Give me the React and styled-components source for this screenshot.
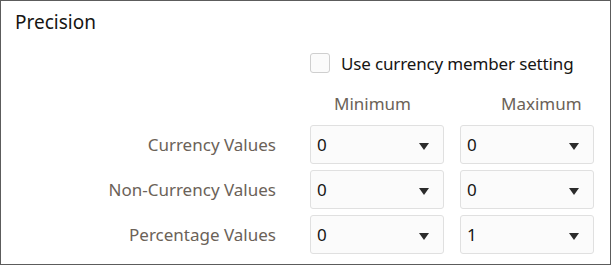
import { Fragment } from "react";
import styled, { createGlobalStyle } from "styled-components";

const GlobalStyle = createGlobalStyle`
  body {
    margin: 0;
    background: #fff;
    font-family: "Noto Sans", "Open Sans", sans-serif;
    color: #161513;
  }
`;

const Panel = styled.section`
  box-sizing: border-box;
  width: 611px;
  height: 265px;
  border: 1px solid #5c5c5c;
  padding: 8px 16px 0 14px;
`;

const Title = styled.h2`
  margin: 0;
  font-size: 19px;
  font-weight: 400;
  line-height: 26px;
  color: #161513;
`;

const Grid = styled.div`
  display: grid;
  grid-template-columns: 1fr 134px 134px;
  column-gap: 16px;
  row-gap: 6px;
  margin-top: 18px;
`;

const CheckRow = styled.label`
  grid-column: 2 / 4;
  display: flex;
  align-items: center;
  gap: 11px;
  height: 20px;
  font-size: 17px;
  letter-spacing: -0.15px;
  color: #161513;
`;

const Box = styled.span`
  box-sizing: border-box;
  flex: none;
  width: 20px;
  height: 20px;
  border: 1px solid #cfcfcf;
  border-radius: 3px;
  background: #fbfbfb;
`;

const ColHead = styled.div`
  grid-column: ${(p) => p.$col};
  padding-left: ${(p) => p.$indent}px;
  font-size: 17px;
  line-height: 22px;
  color: #6b6258;
  margin-top: 14px;
  margin-bottom: 4px;
`;

const Spacer = styled.div`
  grid-column: 1;
`;

const RowLabel = styled.div`
  grid-column: 1;
  display: flex;
  align-items: center;
  justify-content: flex-end;
  padding-right: 18px;
  font-size: 17px;
  color: #6b6258;
`;

const Select = styled.div`
  box-sizing: border-box;
  height: 39px;
  display: flex;
  align-items: center;
  justify-content: space-between;
  padding: 0 14px 0 6px;
  border: 1px solid #e0e0e0;
  border-radius: 3px;
  background: #fbfbfb;
  font-size: 17px;
  color: #161513;
`;

const Caret = styled.span`
  width: 0;
  height: 0;
  margin-top: 3px;
  border-left: 5px solid transparent;
  border-right: 5px solid transparent;
  border-top: 7px solid #2b2b2b;
`;

const rows = [
  { label: "Currency Values", min: "0", max: "0" },
  { label: "Non-Currency Values", min: "0", max: "0" },
  { label: "Percentage Values", min: "0", max: "1" },
];

export default function App() {
  return (
    <>
      <GlobalStyle />
      <Panel>
        <Title>Precision</Title>
        <Grid>
          <CheckRow>
            <Box />
            Use currency member setting
          </CheckRow>
          <Spacer />
          <ColHead $col={2} $indent={24}>Minimum</ColHead>
          <ColHead $col={3} $indent={41}>Maximum</ColHead>
          {rows.map((r) => (
            <Fragment key={r.label}>
              <RowLabel>{r.label}</RowLabel>
              <Select>
                {r.min}
                <Caret />
              </Select>
              <Select>
                {r.max}
                <Caret />
              </Select>
            </Fragment>
          ))}
        </Grid>
      </Panel>
    </>
  );
}
